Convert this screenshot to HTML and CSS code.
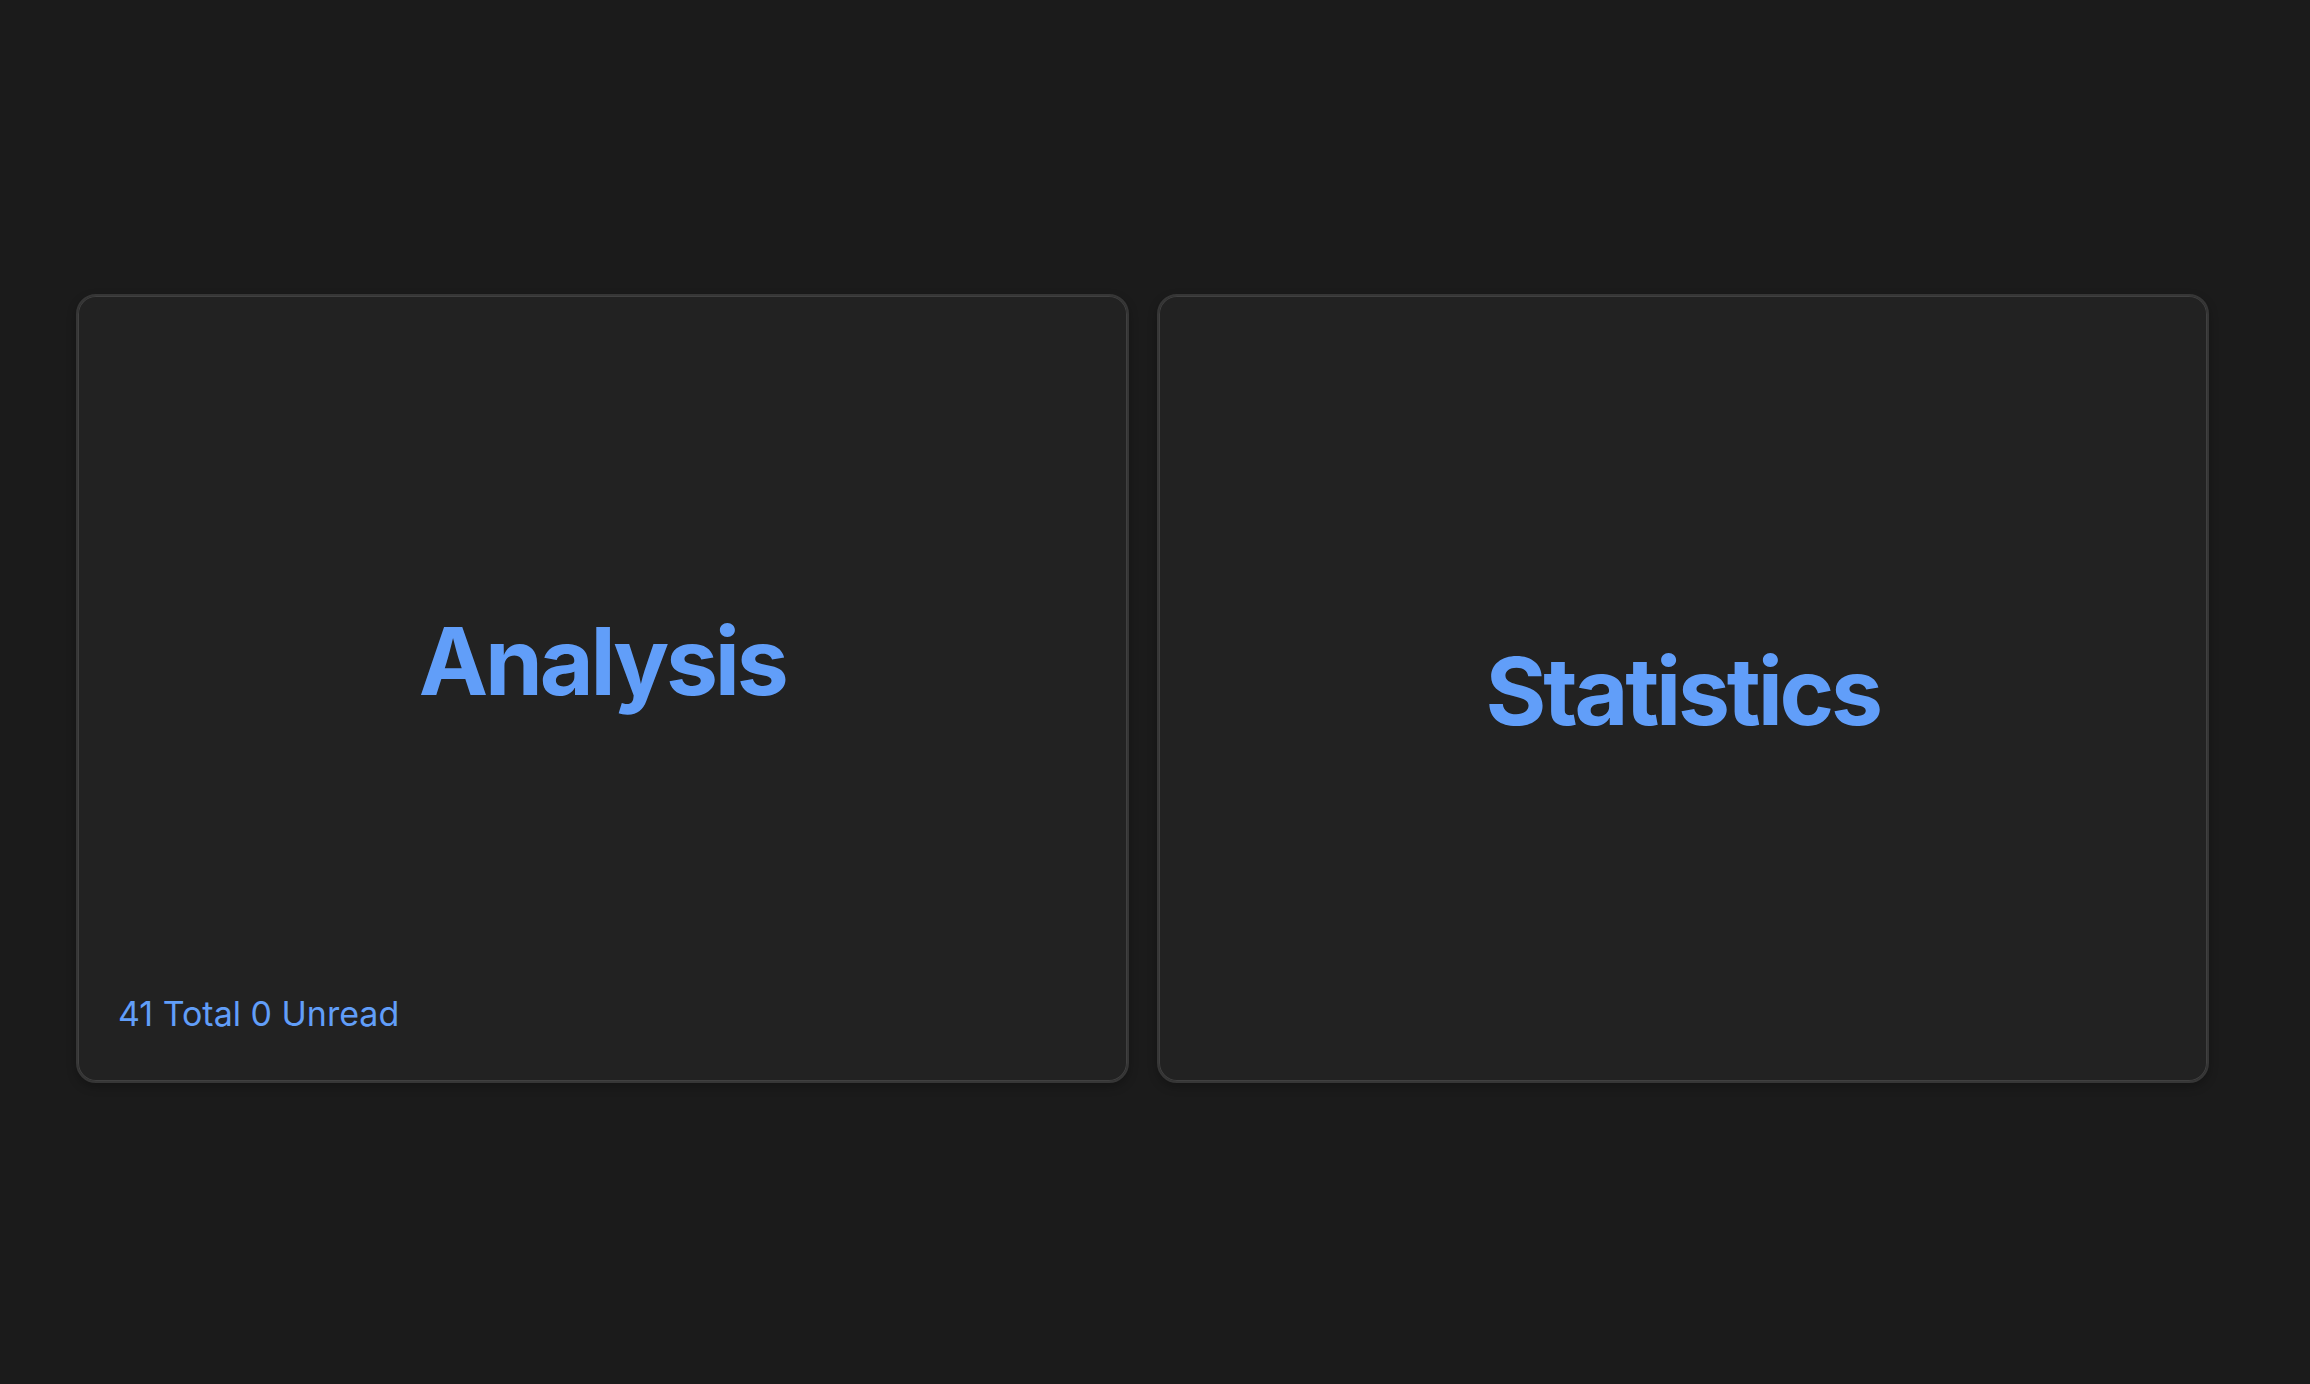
FILE: index.html
```html
<!DOCTYPE html>
<html lang="en">
<head>
<meta charset="utf-8">
<title>Cards</title>
<link rel="stylesheet" href="styles.css">
</head>
<body>
<main class="board">
  <section class="card">
    <div class="card-body"><h2 class="card-title">Analysis</h2></div>
    <div class="card-footer">41 Total 0 Unread</div>
  </section>
  <section class="card">
    <div class="card-body"><h2 class="card-title">Statistics</h2></div>
  </section>
</main>
</body>
</html>
```
FILE: styles.css
```css
html, body {
  margin: 0;
  padding: 0;
  background: #1b1b1b;
  height: 100%;
}
body {
  font-family: Inter, "Noto Sans", "Liberation Sans", sans-serif;
  color: #619ef9;
}
.board {
  display: grid;
  grid-template-columns: 1fr 1fr;
  gap: 28px;
  padding: 294px 101px 0 76px;
}
.card {
  height: 789px;
  box-sizing: border-box;
  background: #222222;
  border: 2px solid #363636;
  border-radius: 20px;
  box-shadow: inset 0 0 0 1px #404040, 0 4px 10px rgba(0, 0, 0, 0.25);
  display: flex;
  flex-direction: column;
  padding: 40px 40px 47px 40px;
}
.card-body {
  flex: 1;
  display: flex;
  align-items: center;
  justify-content: center;
  padding-top: 12px;
}
.card-title {
  margin: 0;
  font-size: 93px;
  font-weight: 700;
  letter-spacing: -0.035em;
  line-height: 1;
  color: #619ef9;
}
.card-footer {
  margin-top: 19px;
  font-size: 34px;
  line-height: 40px;
  color: #619ef9;
}
```
